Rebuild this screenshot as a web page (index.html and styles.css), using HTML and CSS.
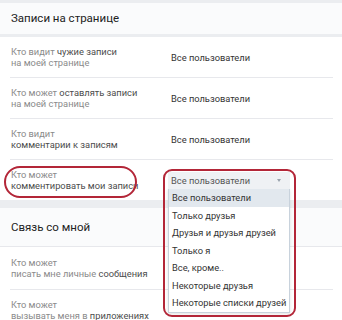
FILE: index.html
```html
<!DOCTYPE html>
<html lang="ru">
<head>
  <meta charset="UTF-8" />
  <title>Приватность</title>
  <link rel="stylesheet" href="styles.css">
</head>
<body>
  <div class="page">
    <div class="sec-head">Записи на странице</div>
    <div class="rows">
      <div class="row">
        <div class="label">Кто видит <b>чужие записи</b><br>на моей странице</div>
        <div class="value">Все пользователи</div>
      </div>
      <div class="row">
        <div class="label">Кто может <b>оставлять записи</b><br>на моей странице</div>
        <div class="value">Все пользователи</div>
      </div>
      <div class="row">
        <div class="label">Кто видит<br><b>комментарии к записям</b></div>
        <div class="value">Все пользователи</div>
      </div>
      <div class="row last">
        <div class="label">Кто может<br><b>комментировать мои записи</b></div>
        <div class="value"></div>
        <span class="mark-oval"></span>
        <span class="mark-box"></span>
        <div class="select">
          <div class="select-head">Все пользователи <span class="arrow"></span></div>
          <ul class="menu">
            <li class="active">Все пользователи</li>
            <li>Только друзья</li>
            <li>Друзья и друзья друзей</li>
            <li>Только я</li>
            <li>Все, кроме..</li>
            <li>Некоторые друзья</li>
            <li>Некоторые списки друзей</li>
          </ul>
        </div>
      </div>
    </div>

    <div class="sec-head second">Связь со мной</div>
    <div class="rows">
      <div class="row tall">
        <div class="label">Кто может<br>писать мне личные <b>сообщения</b></div>
        <div class="value"></div>
      </div>
      <div class="row">
        <div class="label">Кто может<br>вызывать меня в <b>приложениях</b></div>
        <div class="value"></div>
      </div>
    </div>
  </div>
</body>
</html>
```

FILE: styles.css
```css
body {
  margin: 0;
  background: #ebedf0;
  font-family: Roboto, "Open Sans", Arial, sans-serif;
  overflow: hidden;
}
.page {
  padding-top: 3px;
}
.sec-head {
  background: #fafbfc;
  height: 31px;
  line-height: 31px;
  padding-left: 11px;
  font-size: 11.5px;
  color: #222;
  margin-bottom: 3px;
}
.sec-head.second {
  margin-top: 8px;
  height: 38px;
  line-height: 38px;
  margin-bottom: 0;
  border-bottom: 1px solid #e7e8ec;
}
.rows {
  background: #fff;
}
.row {
  position: relative;
  margin: 0 9px 0 10px;
  padding-left: 1px;
  height: 40px;
  border-bottom: 1px solid #e7e8ec;
  display: grid;
  grid-template-columns: 160px 1fr;
  align-items: center;
}
.row.last {
  border-bottom: none;
}
.row.tall {
  height: 42px;
}
.label {
  font-size: 9.3px;
  line-height: 11.5px;
  color: #8a8a8a;
}
.label b {
  font-weight: 400;
  color: #4c4c4c;
}
.value {
  font-size: 9.3px;
  color: #333;
}
.mark-oval {
  position: absolute;
  left: -6px;
  top: 6px;
  width: 129px;
  height: 28px;
  border: 2.5px solid #b32638;
  border-radius: 16px;
}
.mark-box {
  position: absolute;
  left: 153px;
  top: 9px;
  width: 129px;
  height: 144px;
  border: 2.5px solid #b32638;
  border-radius: 9px;
  z-index: 3;
}
.select {
  position: absolute;
  left: 158px;
  top: 12px;
  width: 122px;
  z-index: 2;
  font-size: 9.3px;
  color: #333;
}
.select-head {
  height: 17px;
  line-height: 17px;
  padding-left: 3px;
  background: #eff1f4;
  color: #555;
  position: relative;
}
.arrow {
  position: absolute;
  right: 9px;
  top: 7px;
  border-left: 2.5px solid transparent;
  border-right: 2.5px solid transparent;
  border-top: 3px solid #9aa3ad;
}
.menu {
  list-style: none;
  margin: 0;
  padding: 0;
  background: #fff;
  border: 1px solid #c8d2dc;
  border-top: none;
  box-shadow: 0 1px 3px rgba(0,0,0,0.12);
}
.menu li {
  height: 17.5px;
  line-height: 17.5px;
  padding-left: 3px;
}
.menu li.active {
  background: #e2e8ee;
}
```
